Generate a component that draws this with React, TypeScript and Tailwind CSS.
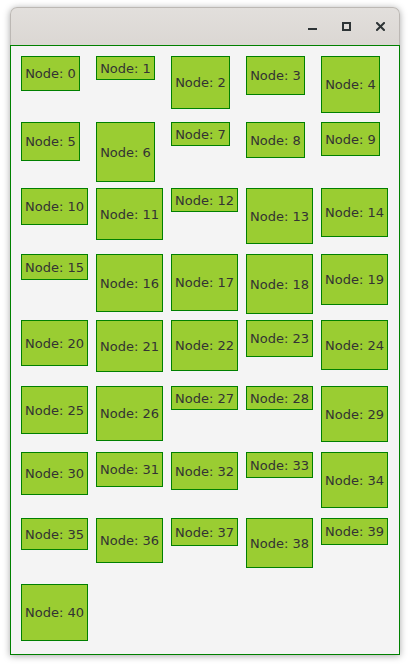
import React from "react";

const heights = [
  35, 24, 53, 39, 57,
  39, 60, 24, 36, 34,
  37, 52, 24, 56, 49,
  26, 58, 57, 60, 51,
  46, 52, 51, 37, 50,
  48, 55, 24, 24, 56,
  43, 35, 38, 26, 56,
  32, 45, 28, 50, 27,
  57,
];

export default function App() {
  return (
    <div className="w-[409px] h-[665px] bg-white overflow-hidden pt-[7px] pl-[10px]">
      <div className="w-[390px] rounded-t-[7px] shadow-[0_1px_7px_rgba(0,0,0,0.35)]">
        <div className="h-[38px] rounded-t-[7px] border border-b-0 border-[#bcb8b4] bg-gradient-to-b from-[#e2dfdc] to-[#dbd7d3] flex items-center justify-end pr-[2px]">
          <div className="w-[34px] h-[9px] flex items-end justify-center">
            <div className="w-[9px] h-[2px] mb-[1px] bg-[#2e3436]" />
          </div>
          <div className="w-[34px] h-[9px] flex items-center justify-center">
            <div className="w-[9px] h-[9px] border-2 border-[#2e3436]" />
          </div>
          <div className="w-[34px] h-[9px] flex items-center justify-center">
            <svg width="9" height="9" viewBox="0 0 9 9">
              <path d="M1 1 L8 8 M8 1 L1 8" stroke="#2e3436" strokeWidth="2" strokeLinecap="square" />
            </svg>
          </div>
        </div>
        <div className="h-[610px] border border-[#008000] bg-[#f4f4f4] pt-[10px] pl-[10px]">
          <div className="grid grid-cols-[repeat(5,67px)] auto-rows-[60px] gap-x-[8px] gap-y-[6px] items-start justify-items-start">
            {heights.map((h, i) => (
              <div
                key={i}
                className={`${i < 10 ? "w-[59px]" : "w-[67px]"} flex items-center justify-center bg-[#9acd32] border border-[#008000] font-['DejaVu_Sans',sans-serif] text-[13px] leading-[15px] text-[#333333] whitespace-nowrap`}
                style={{ height: h }}
              >
                Node: {i}
              </div>
            ))}
          </div>
        </div>
      </div>
    </div>
  );
}
